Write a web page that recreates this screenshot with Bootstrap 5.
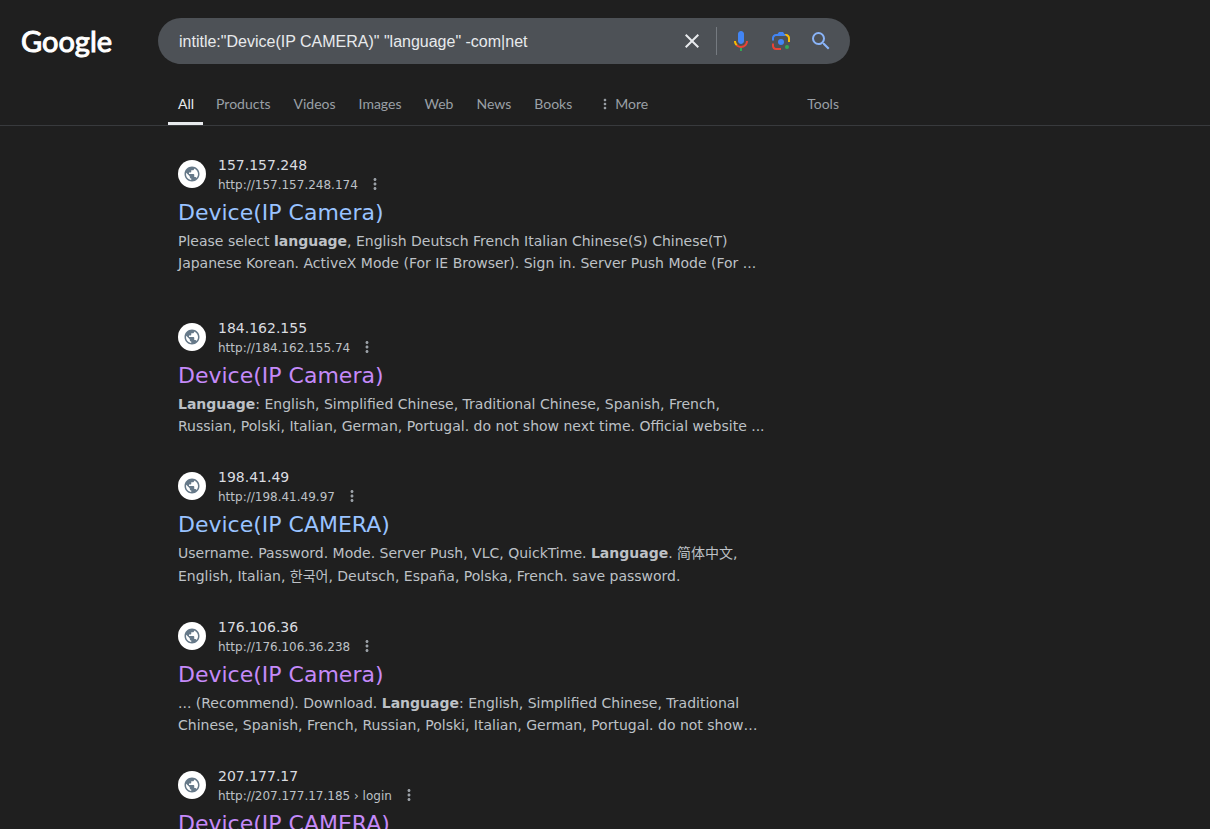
<!DOCTYPE html>
<html lang="en" data-bs-theme="dark">
<head>
<meta charset="utf-8">
<meta name="viewport" content="width=device-width, initial-scale=1">
<title>Google Search</title>
<link href="https://cdn.jsdelivr.net/npm/bootstrap@5.3.0/dist/css/bootstrap.min.css" rel="stylesheet">
<style>
body { background: #1f1f1f; color: #bdc1c6; font-family: "DejaVu Sans", "Noto Sans CJK SC", sans-serif; font-size: 14px; overflow-x: hidden; }
a { text-decoration: none; }
.top-row { padding-top: 18px; }
.brand-col { width: 158px; padding-left: 21px; }
.brand-text { font: 400 29px/40px Lato, sans-serif; color: #fff; -webkit-text-stroke: 1px #fff; }
.search-bar { max-width: 692px; height: 46px; background: #4d5156; padding: 0 9px 0 21px; }
.search-input { font: 16px/24px "Liberation Sans", Arial, sans-serif; color: #e8eaed; outline: 0; min-width: 0; height: 26px; padding: 2px 0 0; }
.icon-btn { width: 40px; height: 40px; }
.divider { width: 1px; height: 28px; background: #757a80; margin: 0 4px; }
.tabs-wrap { border-bottom: 1px solid #383a3d; margin-top: 20px; padding-left: 168px; }
.tabs-row { max-width: 681px; height: 41px; gap: 3px; font: 14px/20px Lato, sans-serif; }
.tab-link { color: #9aa0a6; padding: 10px 10px 8px; border: 0; border-bottom: 3px solid transparent; background: none; white-space: nowrap; }
.tab-link.active { color: #e8eaed; border-bottom-color: #e8eaed; padding-right: 9px; }
.more-tab { gap: 2px; margin-left: 2px; }
.results { margin-left: 178px; max-width: 600px; padding-top: 29px; }
.result { margin-bottom: 30px; }
.result.spaced { margin-bottom: 44px; }
.favicon { width: 28px; height: 28px; background: #fff; margin-top: 5px; }
.site { color: #dadce0; line-height: 20px; }
.url { color: #bdc1c6; font-size: 12px; line-height: 21px; }
.dots { width: 18px; height: 18px; margin-left: 8px; }
.title-link { font-size: 22px; line-height: 34px; color: #99c3ff; }
.title-link.seen { color: #c58af9; }
.snippet { line-height: 22px; }
.snippet :lang(zh) { line-height: 23px; }
</style>
</head>
<body>
<svg class="d-none" aria-hidden="true">
  <symbol id="globe" viewBox="0 0 24 24"><path fill="#667989" d="M12 2C6.48 2 2 6.48 2 12s4.48 10 10 10 10-4.48 10-10S17.52 2 12 2zm-1 17.93c-3.95-.49-7-3.85-7-7.93 0-.62.08-1.21.21-1.79L9 15v1c0 1.1.9 2 2 2v1.93zm6.9-2.54c-.26-.81-1-1.39-1.9-1.39h-1v-3c0-.55-.45-1-1-1H8v-2h2c.55 0 1-.45 1-1V7h2c1.1 0 2-.9 2-2v-.41c2.93 1.19 5 4.06 5 7.41 0 2.08-.8 3.97-2.1 5.39z"/></symbol>
  <symbol id="kebab" viewBox="0 0 24 24"><path fill="#9aa0a6" d="M12 8c1.1 0 2-.9 2-2s-.9-2-2-2-2 .9-2 2 .9 2 2 2zm0 2c-1.1 0-2 .9-2 2s.9 2 2 2 2-.9 2-2-.9-2-2-2zm0 6c-1.1 0-2 .9-2 2s.9 2 2 2 2-.9 2-2-.9-2-2-2z"/></symbol>
</svg>
<header>
  <div class="top-row d-flex align-items-center">
    <div class="brand-col flex-shrink-0"><a href="#" class="brand-text">Google</a></div>
    <form class="search-bar d-flex align-items-center flex-grow-1 rounded-pill" role="search">
      <input class="search-input flex-grow-1 bg-transparent border-0" type="text" aria-label="Search" value='intitle:"Device(IP CAMERA)" "language" -com|net'>
      <button class="icon-btn btn p-0 border-0" type="button" aria-label="Clear"><svg width="24" height="24" viewBox="0 0 24 24" fill="#e8eaed"><path d="M19 6.41L17.59 5 12 10.59 6.41 5 5 6.41 10.59 12 5 17.59 6.41 19 12 13.41 17.59 19 19 17.59 13.41 12z"/></svg></button>
      <span class="divider"></span>
      <button class="icon-btn btn p-0 border-0" type="button" aria-label="Search by voice"><svg width="24" height="24" viewBox="0 0 24 24"><path fill="#4285f4" d="m12 15c1.66 0 3-1.31 3-2.97v-7.02c0-1.66-1.34-3.01-3-3.01s-3 1.34-3 3.01v7.02c0 1.66 1.34 2.97 3 2.97z"/><path fill="#34a853" d="m11 18.08h2v3.92h-2z"/><path fill="#fbbc04" d="m7.05 16.87c-1.27-1.33-2.05-2.83-2.05-4.87h2c0 1.45.56 2.42 1.47 3.38v.32l-1.15 1.18z"/><path fill="#ea4335" d="m12 16.93a4.97 5.25 0 0 1-3.54-1.55l-1.41 1.49c1.26 1.34 3.02 2.13 4.95 2.13 3.87 0 6.99-2.92 6.99-7h-1.99c0 2.92-2.24 4.93-5 4.93z"/></svg></button>
      <button class="icon-btn btn p-0 border-0" type="button" aria-label="Search by image"><svg width="24" height="24" viewBox="0 0 192 192"><circle fill="#34a853" cx="144" cy="144" r="16"/><circle fill="#4285f4" cx="96" cy="104" r="24"/><path fill="#ea4335" d="M24 135.2c0 18.11 14.69 32.8 32.8 32.8H96v-16l-40.1-.1c-8.8 0-15.9-8.19-15.9-17.9v-18H24v19.2z"/><path fill="#fbbc04" d="M168 72.8c0-18.11-14.69-32.8-32.8-32.8H116l20 16c8.8 0 16 8.29 16 18v30h16V72.8z"/><path fill="#4285f4" d="M112 24H80L68 40H56.8C38.69 40 24 54.69 24 72.8V92h16V74c0-9.71 7.2-18 16-18h80L112 24z"/></svg></button>
      <button class="icon-btn btn p-0 border-0" type="submit" aria-label="Search"><svg width="24" height="24" viewBox="0 0 24 24" fill="#8ab4f8"><path d="M15.5 14h-.79l-.28-.27A6.47 6.47 0 0 0 16 9.5 6.5 6.5 0 1 0 9.5 16c1.61 0 3.09-.59 4.23-1.57l.27.28v.79l5 4.99L20.49 19l-4.99-5zm-6 0C7.01 14 5 11.99 5 9.5S7.01 5 9.5 5 14 7.01 14 9.5 11.99 14 9.5 14z"/></svg></button>
    </form>
  </div>
  <div class="tabs-wrap">
    <nav class="tabs-row d-flex" aria-label="Search types">
      <a class="tab-link active" href="#">All</a>
      <a class="tab-link" href="#">Products</a>
      <a class="tab-link" href="#">Videos</a>
      <a class="tab-link" href="#">Images</a>
      <a class="tab-link" href="#">Web</a>
      <a class="tab-link" href="#">News</a>
      <a class="tab-link" href="#">Books</a>
      <button class="tab-link more-tab d-flex align-items-center" type="button"><svg width="16" height="16"><use href="#kebab"/></svg>More</button>
      <button class="tab-link ms-auto" type="button">Tools</button>
    </nav>
  </div>
</header>
<main class="results">
  <article class="result spaced">
    <div class="d-flex align-items-start">
      <span class="favicon rounded-circle d-flex align-items-center justify-content-center"><svg width="18" height="18"><use href="#globe"/></svg></span>
      <div class="ps-2 ms-1"><div class="site">157.157.248</div><div class="url d-flex">http://157.157.248.174<button class="dots btn p-0 border-0 d-flex align-items-center justify-content-center" type="button" aria-label="About this result"><svg width="18" height="18"><use href="#kebab"/></svg></button></div></div>
    </div>
    <a class="title-link d-block" href="#">Device(IP Camera)</a>
    <div class="snippet">Please select <b>language</b>, English Deutsch French Italian Chinese(S) Chinese(T)<br>Japanese Korean. ActiveX Mode (For IE Browser). Sign in. Server Push Mode (For ...</div>
  </article>
  <article class="result">
    <div class="d-flex align-items-start">
      <span class="favicon rounded-circle d-flex align-items-center justify-content-center"><svg width="18" height="18"><use href="#globe"/></svg></span>
      <div class="ps-2 ms-1"><div class="site">184.162.155</div><div class="url d-flex">http://184.162.155.74<button class="dots btn p-0 border-0 d-flex align-items-center justify-content-center" type="button" aria-label="About this result"><svg width="18" height="18"><use href="#kebab"/></svg></button></div></div>
    </div>
    <a class="title-link seen d-block" href="#">Device(IP Camera)</a>
    <div class="snippet"><b>Language</b>: English, Simplified Chinese, Traditional Chinese, Spanish, French,<br>Russian, Polski, Italian, German, Portugal. do not show next time. Official website ...</div>
  </article>
  <article class="result">
    <div class="d-flex align-items-start">
      <span class="favicon rounded-circle d-flex align-items-center justify-content-center"><svg width="18" height="18"><use href="#globe"/></svg></span>
      <div class="ps-2 ms-1"><div class="site">198.41.49</div><div class="url d-flex">http://198.41.49.97<button class="dots btn p-0 border-0 d-flex align-items-center justify-content-center" type="button" aria-label="About this result"><svg width="18" height="18"><use href="#kebab"/></svg></button></div></div>
    </div>
    <a class="title-link d-block" href="#">Device(IP CAMERA)</a>
    <div class="snippet">Username. Password. Mode. Server Push, VLC, QuickTime. <b>Language</b>. <span lang="zh-Hans">简体中文</span>,<br>English, Italian, <span lang="ko">한국어</span>, Deutsch, España, Polska, French. save password.</div>
  </article>
  <article class="result">
    <div class="d-flex align-items-start">
      <span class="favicon rounded-circle d-flex align-items-center justify-content-center"><svg width="18" height="18"><use href="#globe"/></svg></span>
      <div class="ps-2 ms-1"><div class="site">176.106.36</div><div class="url d-flex">http://176.106.36.238<button class="dots btn p-0 border-0 d-flex align-items-center justify-content-center" type="button" aria-label="About this result"><svg width="18" height="18"><use href="#kebab"/></svg></button></div></div>
    </div>
    <a class="title-link seen d-block" href="#">Device(IP Camera)</a>
    <div class="snippet">... (Recommend). Download. <b>Language</b>: English, Simplified Chinese, Traditional<br>Chinese, Spanish, French, Russian, Polski, Italian, German, Portugal. do not show…</div>
  </article>
  <article class="result mb-0">
    <div class="d-flex align-items-start">
      <span class="favicon rounded-circle d-flex align-items-center justify-content-center"><svg width="18" height="18"><use href="#globe"/></svg></span>
      <div class="ps-2 ms-1"><div class="site">207.177.17</div><div class="url d-flex">http://207.177.17.185 › login<button class="dots btn p-0 border-0 d-flex align-items-center justify-content-center" type="button" aria-label="About this result"><svg width="18" height="18"><use href="#kebab"/></svg></button></div></div>
    </div>
    <a class="title-link seen d-block" href="#">Device(IP CAMERA)</a>
  </article>
</main>
<script src="https://cdn.jsdelivr.net/npm/bootstrap@5.3.0/dist/js/bootstrap.bundle.min.js"></script>
</body>
</html>
